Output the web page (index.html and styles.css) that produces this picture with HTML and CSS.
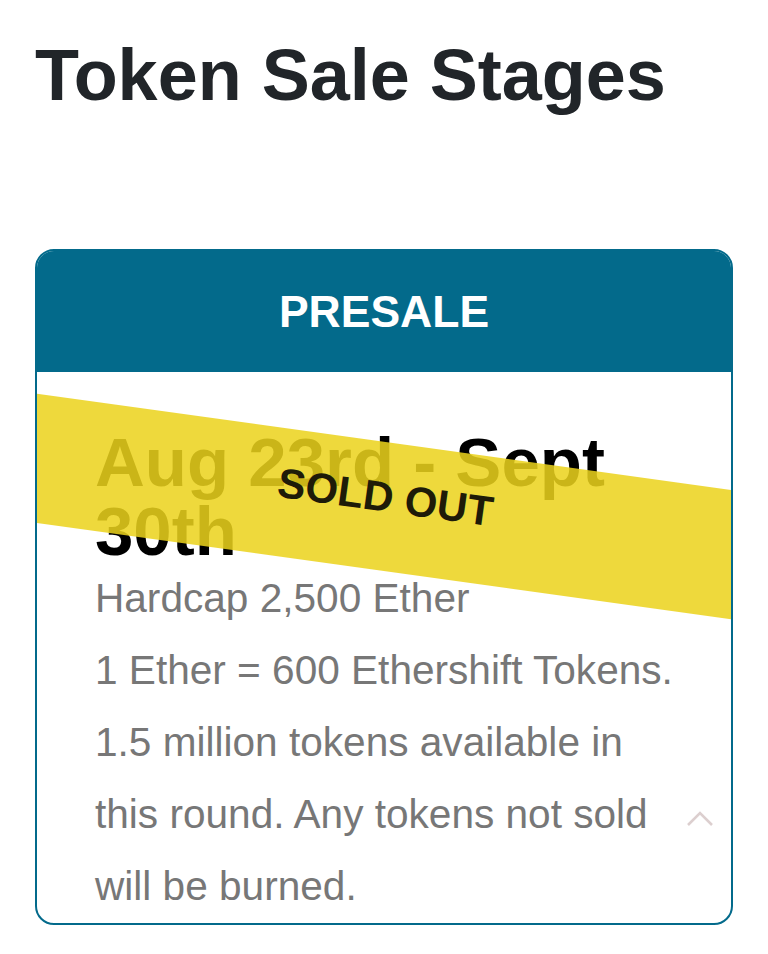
FILE: index.html
```html
<!DOCTYPE html>
<html>
<head>
<meta charset="utf-8">
<link rel="stylesheet" href="styles.css">
</head>
<body>
<main class="page">
  <h1 class="title">Token Sale Stages</h1>
  <section class="card">
    <header class="card-head">PRESALE</header>
    <div class="card-body">
      <h2 class="dates">Aug 23rd - Sept 30th</h2>
      <p class="info">Hardcap 2,500 Ether</p>
      <p class="info">1 Ether = 600 Ethershift Tokens. 1.5 million tokens available in this round. Any tokens not sold will be burned.</p>
    </div>
    <div class="ribbon"><span>SOLD OUT</span></div>
  </section>
  <div class="to-top">
    <svg width="28" height="17" viewBox="0 0 28 17"><path d="M2 15 L14 3 L26 15" fill="none" stroke="#dccfcf" stroke-width="2.6"/></svg>
  </div>
</main>
</body>
</html>
```
FILE: styles.css
```css
html, body {
  margin: 0;
  padding: 0;
  background: #fff;
}
body {
  font-family: "Liberation Sans", Arial, sans-serif;
}
.page {
  position: relative;
  padding: 33px 35px 0;
  height: 921px;
}
.title {
  margin: 0;
  font-size: 72px;
  line-height: 84px;
  font-weight: 700;
  color: #212529;
}
.card {
  position: relative;
  margin-top: 132px;
  border: 2px solid #036a8b;
  border-radius: 19px;
  overflow: hidden;
  background: #fff;
}
.card-head {
  height: 121px;
  display: flex;
  align-items: center;
  justify-content: center;
  background: #036a8b;
  color: #fff;
  font-size: 44.5px;
  font-weight: 700;
}
.card-body {
  padding: 56px 50px 1px 58px;
}
.dates {
  margin: 0 0 -4px;
  font-size: 69px;
  line-height: 69px;
  font-weight: 700;
  color: #000;
}
.info {
  margin: 0;
  font-size: 40.6px;
  line-height: 72px;
  color: #777;
}
.ribbon {
  position: absolute;
  left: -99px;
  top: 192px;
  width: 900px;
  height: 128px;
  background: rgba(235, 211, 28, 0.86);
  transform: rotate(7.9deg);
  display: flex;
  align-items: center;
  justify-content: center;
  box-sizing: border-box;
  padding-bottom: 18px;
  padding-right: 8px;
}
.ribbon span {
  font-size: 42px;
  font-weight: 700;
  color: #1e1b08;
}
.to-top {
  position: absolute;
  left: 686px;
  top: 810px;
}
```
